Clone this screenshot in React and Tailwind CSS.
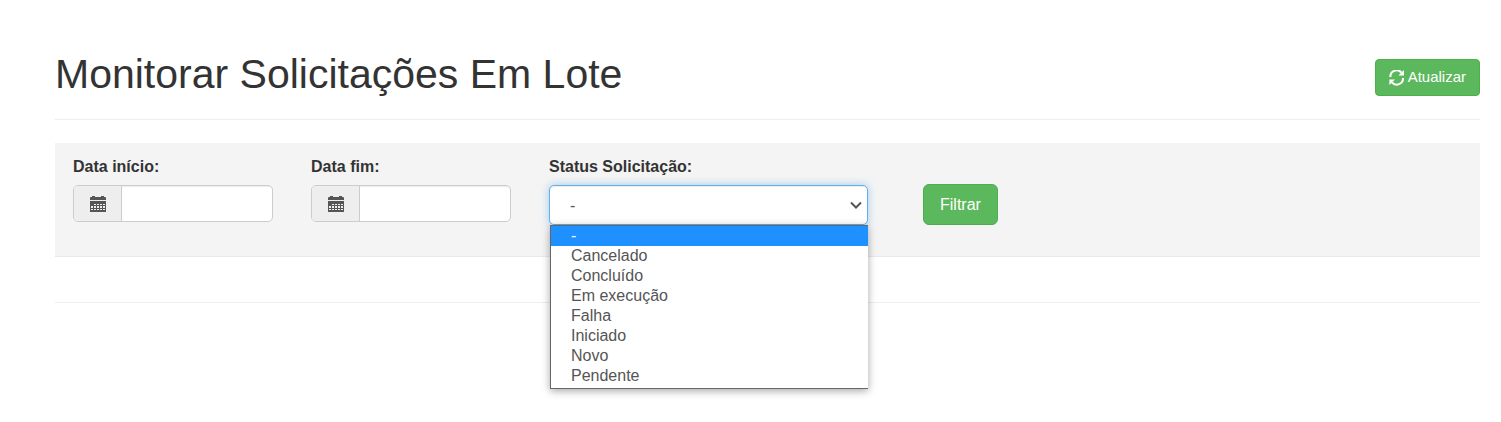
import { useState } from "react";

const STATUSES = [
  "-",
  "Cancelado",
  "Concluído",
  "Em execução",
  "Falha",
  "Iniciado",
  "Novo",
  "Pendente",
];

function RefreshIcon() {
  return (
    <svg viewBox="0 0 16 16" className="size-4" aria-hidden="true">
      <g fill="none" stroke="currentColor" strokeWidth="2">
        <path d="M1.4 7A6.2 6.2 0 0 1 12.4 2.7" />
        <path d="M14 8A6.2 6.2 0 0 1 3 12.3" />
      </g>
      <path fill="currentColor" d="M15 0V5.6H9.4zM.4 15V9.4H6z" />
    </svg>
  );
}

function CalendarIcon() {
  return (
    <svg
      viewBox="0 0 16 16"
      className="size-4 text-[#555]"
      fill="currentColor"
      aria-hidden="true"
    >
      <path d="M0 1.500L1 1h1V0h3v1h6V0h3v1h1l1 .5V4H0z" />
      <path
        fillRule="evenodd"
        d="M0 5h16v11H0zM4 8v1h2V8zM7 8v1h2V8zM10 8v1h2V8zM13 8v1h2V8zM1 10v2h2v-2zM4 10v2h2v-2zM7 10v2h2v-2zM10 10v2h2v-2zM13 10v2h2v-2zM1 13v1h2v-1zM4 13v1h2v-1zM7 13v1h2v-1zM10 13v1h2v-1zM13 13v1h2v-1z"
      />
    </svg>
  );
}

function DateField({ id, label }) {
  return (
    <div className="w-[200px]">
      <label htmlFor={id} className="block font-bold leading-6">
        {label}
      </label>
      <div className="mt-1.5 flex h-[37px] overflow-hidden rounded-[5px] border border-[#ccc] bg-white">
        <span className="flex w-12 shrink-0 items-center justify-center border-r border-[#ccc] bg-[#eee]">
          <CalendarIcon />
        </span>
        <input
          id={id}
          type="text"
          className="min-w-0 flex-1 px-3 text-[#555] shadow-[inset_0_1px_1px_rgba(0,0,0,0.075)] outline-none"
        />
      </div>
    </div>
  );
}

function StatusField() {
  const [status, setStatus] = useState("-");
  return (
    <div className="w-[319px]">
      <label htmlFor="status" className="block font-bold leading-6">
        Status Solicitação:
      </label>
      <div className="relative mt-1.5 text-[#555]">
        <select
          id="status"
          value={status}
          onChange={(e) => setStatus(e.target.value)}
          className="block h-10 w-full appearance-none rounded-[5px] border border-[#66afe9] bg-white px-5 pt-0.5 shadow-[inset_0_1px_1px_rgba(0,0,0,0.075),0_0_8px_rgba(102,175,233,0.6)] outline-none"
        >
          {STATUSES.map((s) => (
            <option key={s}>{s}</option>
          ))}
        </select>
        <svg
          viewBox="0 0 12 8"
          className="pointer-events-none absolute top-4 right-1.5 h-2 w-3"
          fill="none"
          stroke="currentColor"
          strokeWidth="2"
          aria-hidden="true"
        >
          <path d="M1 1.5l5 5 5-5" />
        </svg>
        <ul
          role="listbox"
          aria-label="Status Solicitação"
          className="absolute top-full right-0 left-px z-10 border-t border-b border-l border-[#666] bg-white pb-0.5 leading-5 shadow-[0_2px_8px_rgba(0,0,0,0.35)]"
        >
          {STATUSES.map((s) => (
            <li
              key={s}
              role="option"
              aria-selected={s === status}
              onClick={() => setStatus(s)}
              className="px-5 aria-selected:bg-[#1e90ff] aria-selected:text-white"
            >
              {s}
            </li>
          ))}
        </ul>
      </div>
    </div>
  );
}

export default function App() {
  return (
    <main className="min-h-screen pt-[49px] pr-[21px] pb-8 pl-[55px] font-['Liberation_Sans',Arial,sans-serif] text-base text-[#333]">
      <header className="flex items-center justify-between border-b border-[#eee] pb-[19px]">
        <h1 className="text-[41px] leading-[51px]">
          Monitorar Solicitações Em Lote
        </h1>
        <button
          type="button"
          className="mt-1.5 flex h-[37px] items-center gap-[3px] rounded-[4px] border border-[#4cae4c] bg-[#5cb85c] px-[13px] text-[15px] text-white"
        >
          <RefreshIcon />
          Atualizar
        </button>
      </header>

      <form
        className="mt-[23px] flex flex-wrap items-start border-b border-[#e8e8e8] bg-[#f4f4f4] px-[18px] pt-3 pb-[31px]"
        onSubmit={(e) => e.preventDefault()}
      >
        <div className="flex flex-wrap gap-x-[38px]">
          <DateField id="data-inicio" label="Data início:" />
          <DateField id="data-fim" label="Data fim:" />
          <StatusField />
        </div>
        <button
          type="submit"
          className="mt-[29px] ml-[55px] h-[41px] rounded-[6px] border border-[#4cae4c] bg-[#5cb85c] px-4 text-white"
        >
          Filtrar
        </button>
      </form>

      <hr className="mt-[45px] border-[#eee]" />
    </main>
  );
}
